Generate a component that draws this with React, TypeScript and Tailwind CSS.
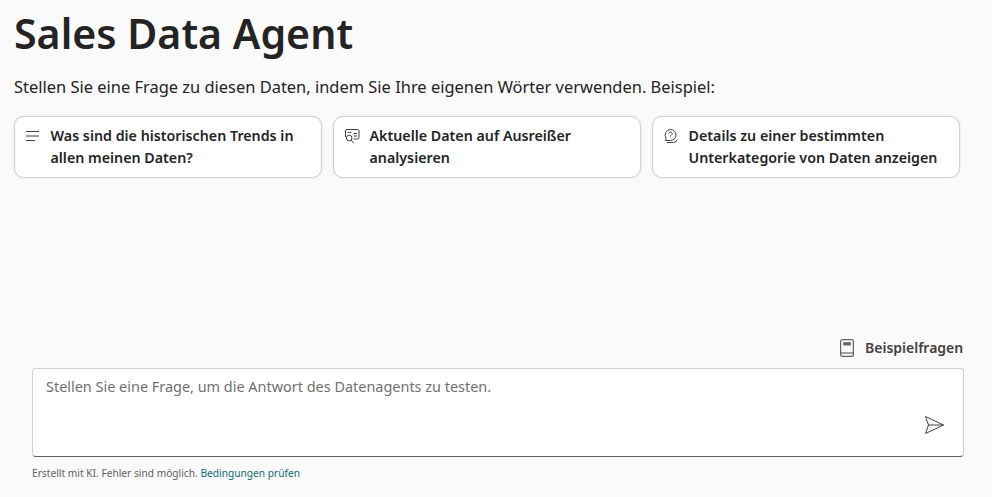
function Lines() {
  return (
    <svg width="16" height="16" viewBox="0 0 16 16" fill="none" stroke="#424242" strokeWidth="1" className="shrink-0">
      <path d="M1 3.5h13M1 8h13M1 12.5h9" />
    </svg>
  );
}
function Search() {
  return (
    <svg width="16" height="16" viewBox="0 0 16 16" fill="none" stroke="#424242" strokeWidth="1" className="shrink-0">
      <path d="M1.5 9V3A1.5 1.5 0 0 1 3 1.5h10.5A1.5 1.5 0 0 1 15 3v6.5a1.5 1.5 0 0 1-1.5 1.5H9.5" />
      <path d="M3.5 4.3h4M9.5 5.5h3.5M9.5 8h3.5" />
      <circle cx="5.2" cy="10" r="2.8" />
      <path d="M7.2 12.2l2.6 3" />
    </svg>
  );
}
function Question() {
  return (
    <svg width="16" height="16" viewBox="0 0 16 16" fill="none" stroke="#424242" strokeWidth="1" className="shrink-0">
      <path d="M7.5 1.5a5.5 5.5 0 0 1 0 11H2.2l1-2.2A5.5 5.5 0 0 1 7.5 1.5z" />
      <path d="M4 14.5h6.5a4.5 4.5 0 0 0 4-3" />
      <path d="M5.8 5.6a1.7 1.7 0 1 1 2.6 1.5c-.6.3-.9.6-.9 1.3M7.5 9.6v.5" />
    </svg>
  );
}
function Book() {
  return (
    <svg width="16" height="20" viewBox="0 0 16 20" fill="none" stroke="#616161" strokeWidth="1.2">
      <rect x="1.6" y="1.6" width="12.8" height="16.8" rx="2" />
      <path d="M1.6 15h12.8" />
      <rect x="4.2" y="4.2" width="7.6" height="3.2" fill="#616161" stroke="none" />
    </svg>
  );
}
function Send() {
  return (
    <svg width="20" height="20" viewBox="0 0 20 20" fill="none" stroke="#424242" strokeWidth="1" strokeLinejoin="round">
      <path d="M1.5 1.5L19.5 10 1.5 18.5 4.5 10z" />
      <path d="M4.5 10H19.5" />
    </svg>
  );
}
function Card({ icon, children }: { icon: React.ReactNode; children: React.ReactNode }) {
  return (
    <div className="w-[308px] h-[62px] flex gap-[9.5px] rounded-[10px] border border-[#d1d1d1] shadow-[0_0_2px_rgba(0,0,0,0.12)] bg-white pl-[10px] pr-1 pt-[8px]">
      <div className="pt-[3px]">{icon}</div>
      <div className="text-[14.25px] leading-[22px] font-semibold text-[#242424]">{children}</div>
    </div>
  );
}
export default function App() {
  return (
    <div className="w-[992px] h-[497px] overflow-hidden bg-[#fafafa] flex flex-col text-[#242424] font-['Noto_Sans','Open_Sans',sans-serif]">
      <div className="px-[14px] pt-[7px]">
        <h1 className="text-[41.1px] leading-[52px] font-semibold text-[#242424]">Sales Data Agent</h1>
        <p className="mt-[17px] text-[16.45px] leading-[22px] whitespace-nowrap">Stellen Sie eine Frage zu diesen Daten, indem Sie Ihre eigenen Wörter verwenden. Beispiel:</p>
        <div className="mt-[18px] flex gap-[11px]">
          <Card icon={<Lines />}>Was sind die historischen Trends in allen meinen Daten?</Card>
          <Card icon={<Search />}>Aktuelle Daten auf Ausreißer analysieren</Card>
          <Card icon={<Question />}>Details zu einer bestimmten Unterkategorie von Daten anzeigen</Card>
        </div>
      </div>
      <div className="mt-auto flex flex-col pl-[32px] pr-[28px] pb-[17px]">
        <div className="flex justify-end items-center gap-[9px] text-[14px] leading-[20px] font-semibold text-[#424242] mb-[10px]">
          <span className="relative -left-[1px]"><Book /></span>
          <span className="w-[99px]">Beispielfragen</span>
        </div>
        <div className="h-[89px] flex flex-col rounded-[4px] border border-[#d1d1d1] border-b-[#616161] bg-white pl-[13px] pr-[19px] pt-[8px] pb-[21px]">
          <div className="text-[14.45px] leading-[20px] text-[#707070]">Stellen Sie eine Frage, um die Antwort des Datenagents zu testen.</div>
          <div className="mt-auto flex justify-end"><Send /></div>
        </div>
        <div className="mt-[9px] text-[10.2px] leading-[14px] text-[#616161]">
          Erstellt mit KI. Fehler sind möglich. <span className="text-[#0f6c75]">Bedingungen prüfen</span>
        </div>
      </div>
    </div>
  );
}
